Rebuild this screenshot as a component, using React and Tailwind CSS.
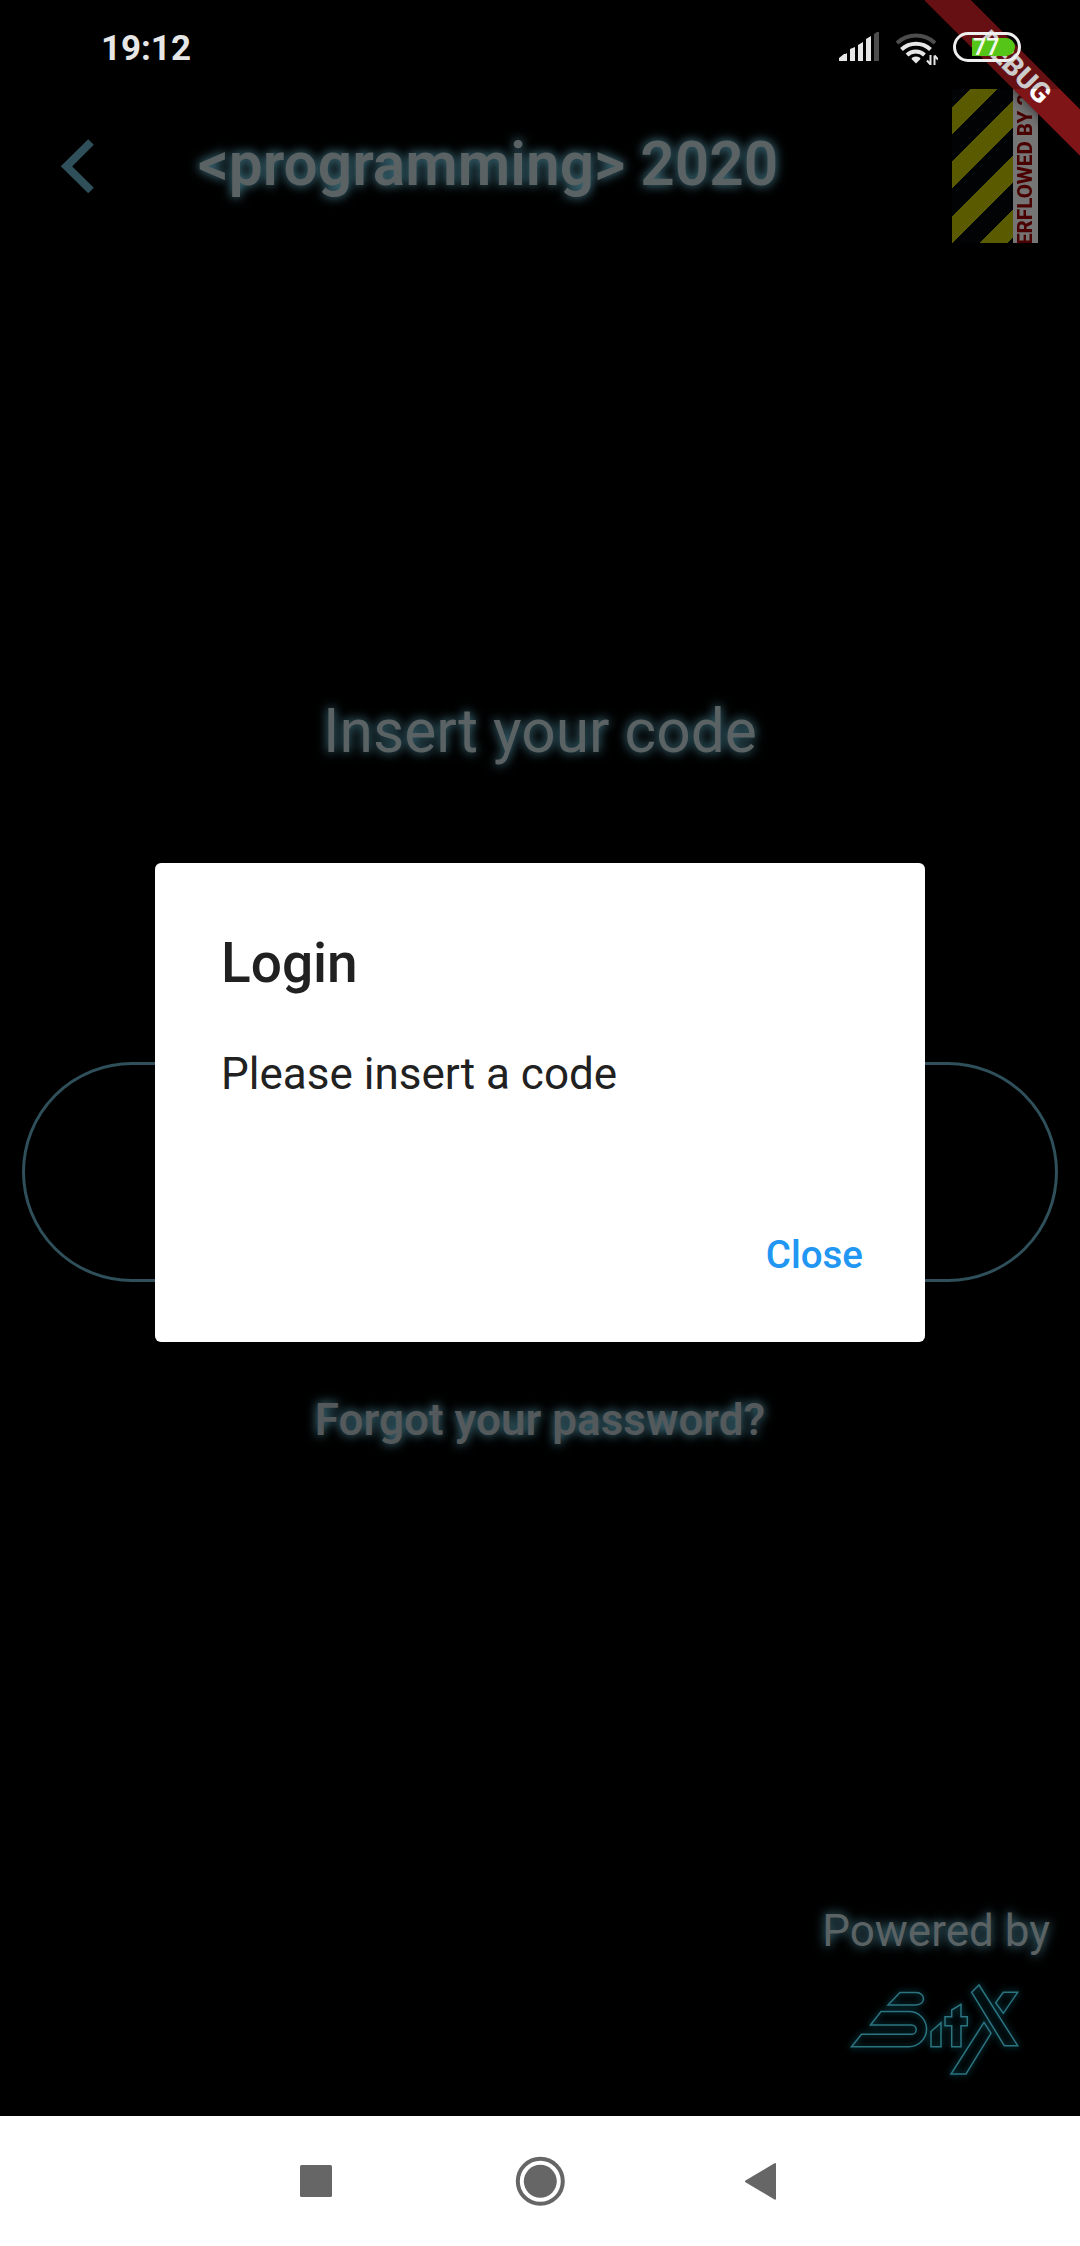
const glow = "[text-shadow:0_0_11px_#4d8a9c]";

function SignalIcon() {
  return (
    <svg width="41" height="29" viewBox="0 0 41 29" fill="#e6e6e6">
      <path d="M0 29v-3l5-4h1.500l1.500-1v8z" />
      <path d="M11 29V17l5-2v14zM19 29V13l5-3v19zM27 29V7l5-3v25z" />
      <path d="M35 29V2l3-2h2v29z" fill="#4d4d4d" />
    </svg>
  );
}

function WifiIcon() {
  return (
    <svg width="43" height="33" viewBox="0 0 43 33" fill="none">
      <path d="M2 11a28 28 0 0 1 38 0" stroke="#4d4d4d" strokeWidth="4" />
      <path d="M6.500 17.500a21 21 0 0 1 29 0" stroke="#e6e6e6" strokeWidth="4" />
      <path d="M12 23a13 13 0 0 1 17.500 0" stroke="#e6e6e6" strokeWidth="4" />
      <path d="M21 24.500c2.500 0 4.500 1 4.500 2.500L21 31.500 16.500 27c0-1.500 2-2.500 4.500-2.500z" fill="#e6e6e6" />
      <path d="M35.500 23v10M32 28.500l3.500 4M39.500 33V23.500M39.500 23.500l3.500 4" stroke="#e6e6e6" strokeWidth="2" />
    </svg>
  );
}

function Battery() {
  return (
    <div className="relative h-[30px] w-[68px] rounded-full border-[3px] border-[#efefef] p-[3px]">
      <div className="ml-[13px] h-full rounded-l-[2px] rounded-r-full bg-[#55c517]" />
      <span className="absolute top-0 left-[17px] text-[23px] leading-[25px] font-semibold text-[#f5f8ee]">77</span>
    </div>
  );
}

function OverflowMarker() {
  return (
    <div className="ml-auto mr-[42px] flex h-[154px] w-[86px] overflow-hidden">
      <svg width="61" height="154" viewBox="952 89 61 154" shapeRendering="crispEdges" fill="#5a5a00">
        <rect x="952" y="89" width="61" height="154" fill="#010305" />
        <path d="M952 107l61-61v27.300l-61 61z" />
        <path d="M952 161.500l61-61v27.300l-61 61z" />
        <path d="M952 216l61-61v27.300l-61 61z" />
        <path d="M952 270.700l61-61v27.300l-61 61z" />
      </svg>
      <div className="w-[25px] bg-[#757575] indent-[-2px] text-[20.600px] leading-[25px] font-extrabold whitespace-nowrap text-[#4a0000] [writing-mode:vertical-rl] rotate-180">
        ERFLOWED BY 2
      </div>
    </div>
  );
}

function DebugBanner() {
  return (
    <div className="pointer-events-none absolute top-0 right-0 h-[220px] w-[220px] overflow-hidden">
      <div className="absolute top-[49.500px] left-[44px] flex h-[33px] w-[220px] rotate-45 items-center justify-center bg-[#801518] pl-[2px] text-[28px] leading-none font-extrabold text-white shadow-[0_0_14px_rgba(0,0,0,0.6)]">
        DEBUG
      </div>
    </div>
  );
}

function StatusBar() {
  return (
    <div className="absolute inset-x-0 top-0 flex h-[89px] items-start bg-black/20">
      <span className="mt-[28px] ml-[101px] text-[34.900px] leading-[41px] font-bold text-[#e6e6e6]">19:12</span>
      <div className="mt-[32px] ml-auto mr-[59px] flex">
        <SignalIcon />
        <div className="ml-[15px]"><WifiIcon /></div>
        <div className="ml-[15px]"><Battery /></div>
      </div>
    </div>
  );
}

function SitXLogo() {
  return (
    <svg
      className="drop-shadow-[0_0_3px_#0d6f80]"
      width="180"
      height="105"
      viewBox="845 1975 180 105"
      fill="none"
      stroke="#2b7480"
      strokeWidth="1.500"
    >
      <path d="M888 2005l12-12.500h16c10 0 10 12.500 0 12.500z" />
      <path d="M870.500 2025l10.500-13.500h28a17.600 17.600 0 0 1 0 35.200h-57.500l10-12.400h50a4.650 4.650 0 0 0 0-9.300z" />
      <path d="M931 2046.700v-15.200l10-8.800v24z" />
      <path d="M945 2016.700h6.700v-6.700l9.300-5.700v12.400h6.300v9h-6.300v21h-9.300v-21h-6.700z" />
      <path d="M971.700 1992.300l7.300-7.300 38.700 60.700h-13.400z" />
      <path d="M995.700 2002.700l7.600-10.400h14.400l-14.400 21z" />
      <path d="M984 2022.300l7 11-25 40.700h-15z" />
    </svg>
  );
}

function LoginDialog() {
  return (
    <div className="absolute inset-x-0 top-[863px] mx-auto flex h-[479px] w-[770px] flex-col rounded-[6px] bg-white pt-[67px] pr-[62px] pb-[44px] pl-[66px] text-[#212121]">
      <h2 className="text-[55px] leading-[66px] font-medium">Login</h2>
      <p className="mt-[50px] text-[44px] leading-[56px]">Please insert a code</p>
      <button className="mt-auto mb-[19px] self-end text-[38.500px] leading-[48px] font-medium text-[#2196f3]">Close</button>
    </div>
  );
}

function NavigationBar() {
  return (
    <div className="h-[130px] bg-white">
      <svg width="1080" height="130" viewBox="0 2116 1080 130" fill="#666">
        <rect x="300" y="2165" width="32" height="32" rx="1.500" />
        <circle cx="540.300" cy="2181.300" r="22.500" fill="none" stroke="#666" strokeWidth="4" />
        <circle cx="540.300" cy="2181.300" r="16.500" />
        <path d="M746 2181.400l29-17.300v34.600z" stroke="#666" strokeWidth="2" strokeLinejoin="round" />
      </svg>
    </div>
  );
}

export default function App() {
  return (
    <div className="relative flex h-[2246px] w-[1080px] flex-col overflow-hidden bg-black font-['Roboto',sans-serif] text-[#5b6264]">
      <header className="mt-[89px] flex h-[154px] items-start">
        <svg className="mt-[50px] ml-[61px]" width="33" height="55" viewBox="0 0 33 55" fill="none" stroke="#2f4f5a" strokeWidth="8">
          <path d="M30 3L5.500 27.300 30 51.500" />
        </svg>
        <h1 className={`mt-[40px] ml-[104px] text-[60.400px] leading-[71px] font-semibold whitespace-nowrap ${glow}`}>
          &lt;programming&gt; 2020
        </h1>
        <OverflowMarker />
      </header>
      <main className="flex flex-1 flex-col">
        <p className={`mt-[454px] text-center text-[60.500px] leading-[70px] ${glow}`}>Insert your code</p>
        <div className="mx-[22px] mt-[295px] h-[220px] rounded-full border-[3px] border-[#2f4f5a]" />
        <p className={`mt-[110px] text-center text-[44px] leading-[56px] font-semibold text-[#54595b] ${glow}`}>Forgot your password?</p>
        <footer className="mt-auto flex flex-col items-end pb-[36px]">
          <p className={`mr-[30px] text-[44px] leading-[52px] ${glow}`}>Powered by</p>
          <div className="mt-[18px] mr-[55px]"><SitXLogo /></div>
        </footer>
      </main>
      <NavigationBar />
      <LoginDialog />
      <DebugBanner />
      <StatusBar />
    </div>
  );
}
